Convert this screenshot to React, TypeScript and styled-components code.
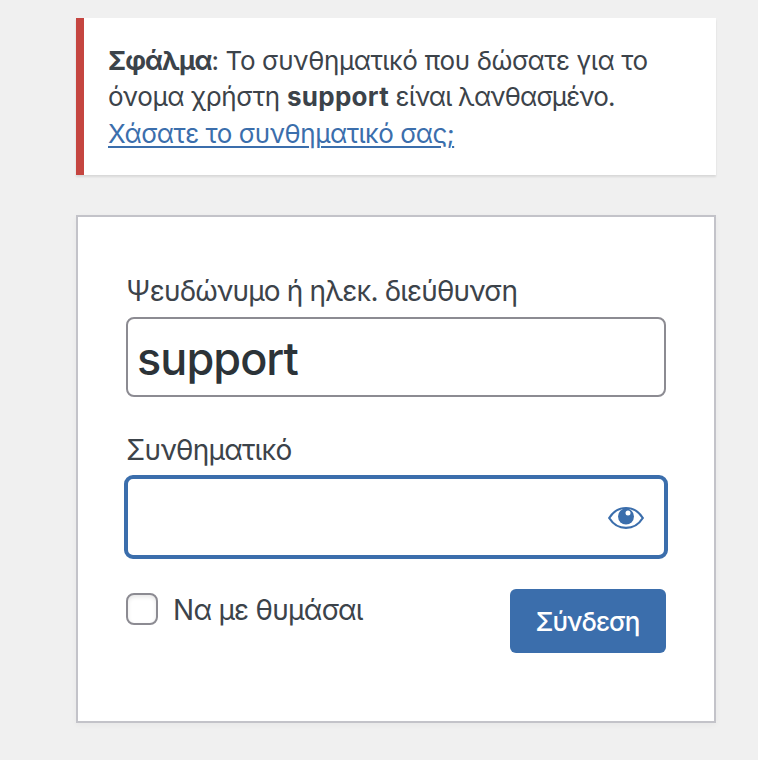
import React from 'react';
import styled, { createGlobalStyle } from 'styled-components';

const GlobalStyle = createGlobalStyle`
  * { box-sizing: border-box; }
  body {
    margin: 0;
    background: #f0f0f0;
    color: #3c434a;
    font-family: Inter, "Liberation Sans", sans-serif;
    font-size: 26px;
    font-feature-settings: "calt" 0;
    -webkit-font-smoothing: antialiased;
  }
`;

const Page = styled.main`
  width: 758px;
  height: 760px;
  padding: 18px 42px 0 76px;
  overflow: hidden;
`;

const Notice = styled.div`
  height: 157px;
  padding: 25px 0 0 24px;
  border-left: 8px solid #c54540;
  background: #fff;
  box-shadow: 0 2px 2px rgba(0, 0, 0, 0.1);
  line-height: 36.4px;
`;

const Line = styled.div`
  white-space: nowrap;
`;

const Run = styled.span<{ $spacing: number }>`
  letter-spacing: ${(p) => p.$spacing}px;
`;

const Link = styled.a`
  color: #3b6eac;
  letter-spacing: -0.46px;
  text-decoration: underline;
  text-decoration-thickness: 2px;
  text-underline-offset: 3px;
`;

const Form = styled.form`
  height: 508px;
  margin-top: 40px;
  padding: 53px 48px 0;
  border: 2px solid #c3c3c9;
  background: #fff;
  box-shadow: 0 2px 6px rgba(0, 0, 0, 0.04);
`;

const Label = styled.label<{ $spacing: number }>`
  display: block;
  height: 42px;
  line-height: 42px;
  font-size: 28px;
  white-space: nowrap;
  letter-spacing: ${(p) => p.$spacing}px;
`;

const UserInput = styled.input`
  display: block;
  width: 540px;
  height: 80px;
  margin: 5px 0 32px;
  padding: 2px 9px 0;
  border: 2px solid #8c8b92;
  border-radius: 8px;
  outline: none;
  background: #fff;
  color: #2c3338;
  font: 500 45px Inter, sans-serif;
  letter-spacing: -0.95px;
`;

const PasswordField = styled.div`
  display: flex;
  align-items: center;
  width: 544px;
  height: 84px;
  margin: 4px -2px 0;
  padding-right: 20px;
  border: 4px solid #3b6eac;
  border-radius: 9px;
`;

const PasswordInput = styled.input`
  flex: 1;
  min-width: 0;
  height: 100%;
  border: 0;
  outline: none;
  background: transparent;
  font-size: 45px;
`;

const RevealButton = styled.button`
  display: flex;
  margin-top: 2px;
  padding: 0;
  border: 0;
  background: none;
`;

const Actions = styled.div`
  display: flex;
  justify-content: space-between;
  align-items: flex-start;
  margin-top: 30px;
`;

const Remember = styled.label`
  display: flex;
  align-items: flex-start;
  padding-top: 4px;
  gap: 15px;
  font-size: 28px;
  line-height: 34px;
  letter-spacing: -0.72px;
  white-space: nowrap;
`;

const Checkbox = styled.input`
  appearance: none;
  width: 32px;
  height: 32px;
  margin: 0;
  border: 2px solid #8c8b92;
  border-radius: 8px;
  background: #fff;
  box-shadow: inset 0 2px 4px rgba(0, 0, 0, 0.1);
`;

const Submit = styled.button`
  width: 156px;
  height: 64px;
  padding: 1px 1px 0 0;
  border: 0;
  border-radius: 6px;
  background: #3b6eac;
  color: #fff;
  font: 500 26px Inter, sans-serif;
  letter-spacing: -1px;
`;

export default function App() {
  return (
    <>
      <GlobalStyle />
      <Page>
        <Notice>
          <Line>
            <Run as="strong" $spacing={-0.9}>Σφάλμα</Run>
            <Run $spacing={-0.39}>: Το συνθηματικό που δώσατε για το</Run>
          </Line>
          <Line>
            <Run $spacing={-0.33}>όνομα χρήστη </Run>
            <Run as="strong" $spacing={0.3}>support</Run>
            <Run $spacing={-0.85}> είναι λανθασμένο.</Run>
          </Line>
          <Line><Link href="#">Χάσατε το συνθηματικό σας;</Link></Line>
        </Notice>
        <Form>
          <Label htmlFor="user" $spacing={-0.84}>Ψευδώνυμο ή ηλεκ. διεύθυνση</Label>
          <UserInput id="user" defaultValue="support" spellCheck={false} />
          <Label htmlFor="password" $spacing={-0.73}>Συνθηματικό</Label>
          <PasswordField>
            <PasswordInput id="password" type="password" />
            <RevealButton type="button" aria-label="Εμφάνιση συνθηματικού">
              <svg width="36" height="24" viewBox="0 0 36 24" fill="none">
                <path d="M1.200 12C9.500-1.300 26.500-1.300 34.800 12C26.500 25.300 9.500 25.300 1.200 12Z" stroke="#3b6eac" strokeWidth="2.200" />
                <circle cx="18" cy="10.500" r="8" fill="#3b6eac" />
                <circle cx="20" cy="7" r="2.500" fill="#fff" />
              </svg>
            </RevealButton>
          </PasswordField>
          <Actions>
            <Remember><Checkbox type="checkbox" />Να με θυμάσαι</Remember>
            <Submit type="button">Σύνδεση</Submit>
          </Actions>
        </Form>
      </Page>
    </>
  );
}
